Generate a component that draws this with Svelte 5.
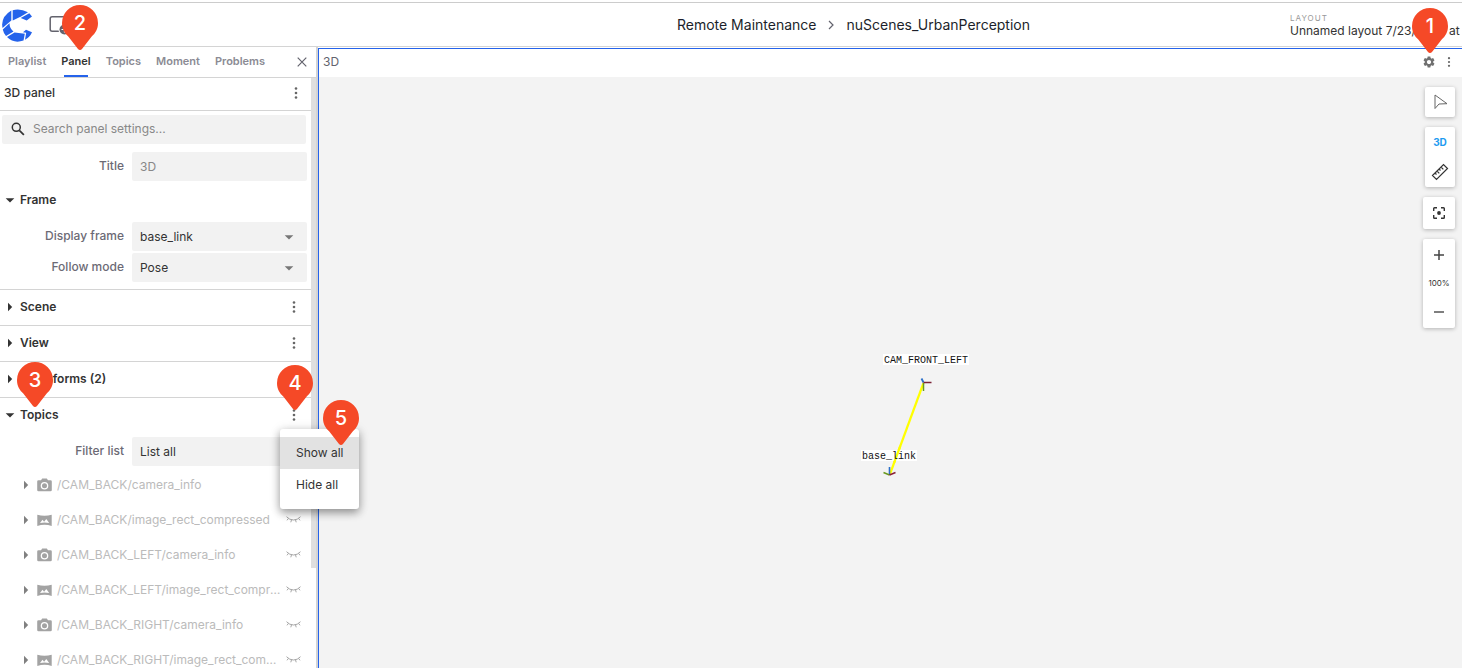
<script>
  const tabs = ['Playlist', 'Panel', 'Topics', 'Moment', 'Problems'];
  const sections = [
    { name: 'Scene', menu: true },
    { name: 'View', menu: true },
    { name: 'Transforms (2)', menu: false },
  ];
  const topics = [
    { name: '/CAM_BACK/camera_info', kind: 'camera' },
    { name: '/CAM_BACK/image_rect_compressed', kind: 'image' },
    { name: '/CAM_BACK_LEFT/camera_info', kind: 'camera' },
    { name: '/CAM_BACK_LEFT/image_rect_compressed', kind: 'image' },
    { name: '/CAM_BACK_RIGHT/camera_info', kind: 'camera' },
    { name: '/CAM_BACK_RIGHT/image_rect_compressed', kind: 'image' },
  ];
  const pins = [
    { n: 2, x: 80, y: 5 },
    { n: 3, x: 35, y: 362 },
    { n: 4, x: 295, y: 365 },
    { n: 5, x: 341, y: 400 },
  ];
  let active = $state('Panel');
</script>

{#snippet dots()}
  <svg class="dots" width="4" height="14" viewBox="0 0 4 14" aria-hidden="true">
    <circle cx="2" cy="2.5" r="1.3" /><circle cx="2" cy="7" r="1.3" /><circle cx="2" cy="11.5" r="1.3" />
  </svg>
{/snippet}

{#snippet caret(open)}
  <svg class="caret" width="10" height="10" viewBox="0 0 10 10" aria-hidden="true">
    {#if open}<path d="M.7 3.2h8.6L5 7.5z" />{:else}<path d="M3 .8v8.4L7.2 5z" />{/if}
  </svg>
{/snippet}

{#snippet pin(n)}
  <svg width="36" height="46" viewBox="0 0 36 46" aria-hidden="true">
    <path fill="#f54927" d="M18 0a18 18 0 0 1 18 18c0 6-2.5 10-6.500 13.800L20.200 43.800q-2.200 2.600-4.400 0L6.500 31.800C2.500 28 0 24 0 18A18 18 0 0 1 18 0z" />
  </svg>
  <span>{n}</span>
{/snippet}

<div class="app">
  <header class="top">
    <div class="brand">
      <svg width="32" height="34" viewBox="0 0 32 34" role="img" aria-label="Home">
        <g fill="#2563eb">
          <path d="M11.700 2.300Q19 .3 27 4.200L20 8.500 11.700 12.500z" />
          <path d="M19.700 10L28.300 5.200 31 8.500 25.700 12.500z" />
          <path d="M10.300 2.500V12.500L1.500 20Q-.6 9 10.300 2.500z" />
          <path d="M1.800 21.500L8.500 15.300Q8.500 20.500 12.500 23.500L5 28Q2.500 25 1.800 21.500z" />
          <path d="M6 29L13.500 24.500 23.800 25.800 22.500 32.500Q13 36 6 29z" />
          <path d="M22 24.200L25 21.700 31 24.200Q29 29 24 31.700L25.200 24.800z" />
        </g>
      </svg>
      <svg width="30" height="22" viewBox="0 0 30 22" aria-hidden="true">
        <rect x="1.200" y="2.700" width="20" height="14.600" rx="2" fill="none" stroke="#63636d" stroke-width="1.500" />
        <circle cx="15.500" cy="15.500" r="6" fill="#fff" /><circle cx="15.500" cy="15.500" r="5" fill="#63636d" />
        <path stroke="#fff" stroke-width="1.200" d="M12.500 15.500h6M15.500 12.500v6" />
      </svg>
    </div>
    <nav class="crumbs" aria-label="Breadcrumb">
      <a href="#project">Remote Maintenance</a>
      <svg width="6" height="10" viewBox="0 0 6 10" aria-hidden="true"><path d="M1 1l4 4-4 4" fill="none" stroke="#63636d" stroke-width="1.200" /></svg>
      <a href="#record">nuScenes_UrbanPerception</a>
    </nav>
    <div class="layout">
      <small>LAYOUT</small>
      <span>Unnamed layout 7/23/2024 at</span>
    </div>
  </header>

  <div class="body">
    <aside>
      <div class="tabs">
        {#each tabs as tab}
          <button class="tab" class:active={tab === active} onclick={() => (active = tab)}>{tab}</button>
        {/each}
        <button class="close" aria-label="Close">
          <svg width="10" height="10" viewBox="0 0 10 10"><path d="M.7.7l8.600 8.600M9.300.7L.7 9.300" stroke="#63636d" stroke-width="1.200" /></svg>
        </button>
      </div>
      <div class="scroll">
        <div class="content">
          <div class="title">
            <h1>3D panel</h1>
            <button aria-label="Panel menu">{@render dots()}</button>
          </div>
          <label class="search">
            <svg width="14" height="14" viewBox="0 0 14 14" aria-hidden="true"><circle cx="5.300" cy="5.300" r="4" fill="none" stroke="#333" stroke-width="1.500" /><path d="M8.300 8.300l4.600 4.600" stroke="#333" stroke-width="1.700" /></svg>
            <input type="text" placeholder="Search panel settings..." aria-label="Search panel settings" />
          </label>
          <div class="field">
            <label for="title">Title</label>
            <input id="title" type="text" placeholder="3D" />
          </div>
          <section class="frame">
            <button class="head">{@render caret(true)}<span>Frame</span></button>
            <div class="field">
              <label for="frame">Display frame</label>
              <div class="select">
                <select id="frame"><option>base_link</option></select>{@render caret(true)}
              </div>
            </div>
            <div class="field">
              <label for="follow">Follow mode</label>
              <div class="select">
                <select id="follow"><option>Pose</option></select>{@render caret(true)}
              </div>
            </div>
          </section>
          {#each sections as s}
            <section class="row">
              <button class="head">{@render caret(false)}<span>{s.name}</span></button>
              {#if s.menu}<button class="more" aria-label="{s.name} menu">{@render dots()}</button>{/if}
            </section>
          {/each}
          <section class="row">
            <button class="head">{@render caret(true)}<span>Topics</span></button>
            <button class="more" aria-label="Topics menu">{@render dots()}</button>
          </section>
          <div class="field filter">
            <label for="filter">Filter list</label>
            <div class="select">
              <select id="filter"><option>List all</option></select>{@render caret(true)}
            </div>
          </div>
          <ul>
            {#each topics as t}
              <li>
                {@render caret(false)}
                {#if t.kind === 'camera'}
                  <svg class="kind" width="15" height="14" viewBox="0 0 15 14" aria-hidden="true"><path fill-rule="evenodd" d="M5.200.5h4.600L11 2.200h2.500q1.300 0 1.300 1.300v8.500q0 1.300-1.300 1.300h-12Q.2 13.300.2 12V3.500q0-1.300 1.300-1.300H4zM7.500 3.900a3.800 3.800 0 1 0 0 7.600a3.800 3.800 0 0 0 0-7.600zM7.500 5.200a2.500 2.500 0 1 1 0 5a2.500 2.500 0 0 1 0-5z" /></svg>
                {:else}
                  <svg class="kind" width="15" height="14" viewBox="0 0 15 14" aria-hidden="true"><path d="M.3 1.700Q7.500 4 14.700 1.700V13Q7.500 10.700.3 13z" /><path fill="#fff" d="M3 10l2.500-3.200 1.600 1.900 2.200-2.800L12.200 10q-4.700-.8-9.200 0z" /></svg>
                {/if}
                <span>{t.name}</span>
                <button class="eye" aria-label="Show {t.name}">
                  <svg width="15" height="7" viewBox="0 0 15 7"><path fill="none" stroke="#a6a6a6" stroke-width="1" d="M.5.700Q3.500 4 7.500 4T14.500.700M2.500 2.300L1 4.300M5.500 3.800l-.7 2.500M9.500 3.800l.7 2.500M12.500 2.300L14 4.300" /></svg>
                </button>
              </li>
            {/each}
          </ul>
        </div>
        <div class="rail"><div class="thumb"></div></div>
      </div>
    </aside>

    <main>
      <div class="bar">
        <span>3D</span>
        <button class="gear" aria-label="Settings">
          <svg width="14" height="14" viewBox="0 0 24 24"><path fill="#707070" d="M19.140 12.940c.04-.3.060-.61.060-.94 0-.32-.02-.64-.07-.94l2.030-1.580c.18-.14.230-.41.120-.61l-1.920-3.320c-.12-.22-.37-.29-.59-.22l-2.390.96c-.5-.38-1.030-.7-1.620-.94l-.36-2.540c-.04-.24-.24-.41-.48-.41h-3.840c-.24 0-.43.170-.47.410l-.36 2.540c-.59.240-1.130.570-1.620.940l-2.390-.96c-.22-.08-.47 0-.59.220L2.740 8.870c-.12.210-.08.470.120.610l2.030 1.580c-.05.300-.09.630-.09.940s.02.640.070.940l-2.030 1.580c-.18.140-.23.410-.12.610l1.920 3.320c.12.220.370.290.590.220l2.390-.96c.5.380 1.030.700 1.620.940l.36 2.540c.05.240.240.410.480.410h3.840c.24 0 .44-.17.470-.41l.36-2.540c.59-.24 1.130-.56 1.620-.94l2.390.96c.22.080.470 0 .59-.22l1.920-3.320c.12-.22.070-.47-.12-.61l-2.010-1.580zM12 15.600c-1.980 0-3.600-1.620-3.600-3.600s1.620-3.600 3.600-3.600 3.600 1.620 3.600 3.600-1.620 3.600-3.600 3.600z" /></svg>
        </button>
        <button class="small" aria-label="Panel options">{@render dots()}</button>
      </div>
      <div class="canvas">
        <svg class="world" width="120" height="140" viewBox="0 0 120 140" aria-label="Transforms">
          <rect x="25" y="7" width="86" height="11" fill="#fff" />
          <path d="M65.500 36L32 127" stroke="#ff0" stroke-width="2.200" />
          <rect x="3" y="103" width="56" height="11" fill="#fff" />
          <path d="M42.300 99l-6.100 16.500" stroke="#ff0" stroke-width="2.200" />
          <path d="M31.500 128v-8" stroke="#2a6fc9" stroke-width="1.600" /><path d="M31.500 128l-6-2.500" stroke="#6a9a20" stroke-width="1.500" /><path d="M31.500 128l6-2.500" stroke="#8b2035" stroke-width="1.500" />
          <path d="M65.500 35.500l-2-4" stroke="#2a6fc9" stroke-width="1.800" /><path d="M65.500 36v8" stroke="#6a9a20" stroke-width="1.500" /><path d="M65.500 35.500h8" stroke="#7a2035" stroke-width="1.500" />
          <text x="26" y="16">CAM_FRONT_LEFT</text>
          <text x="4" y="112">base_link</text>
        </svg>
        <div class="tools">
          <div class="card narrow">
            <button aria-label="Select"><svg width="16" height="18" viewBox="0 0 16 18"><path d="M3 2v13.500L7 11l8-.3z" fill="none" stroke="#666" stroke-width="1" stroke-linejoin="round" /></svg></button>
          </div>
          <div class="card narrow">
            <button class="mode">3D</button>
            <button aria-label="Measure"><svg width="18" height="18" viewBox="0 0 18 18"><path d="M1.500 12.500l11-11 4 4-11 11zM4 10l1.500 1.500M6 8l2.300 2.300M8 6l1.500 1.500M10 4l2.300 2.300" fill="none" stroke="#333" stroke-width="1.200" /></svg></button>
          </div>
          <div class="card focus">
            <button aria-label="Center view"><svg width="12" height="12" viewBox="0 0 12 12"><path d="M.7 4V1.500Q.7.700 1.500.700H4M8 .7h2.500q.8 0 .8.8V4M11.300 8v2.500q0 .8-.8.8H8M4 11.300H1.500q-.8 0-.8-.8V8" fill="none" stroke="#333" stroke-width="1.400" /><circle cx="6" cy="6" r="1.900" fill="#333" /></svg></button>
          </div>
          <div class="card zoom">
            <button aria-label="Zoom in"><svg width="10" height="10" viewBox="0 0 10 10"><path d="M5 0v10M0 5h10" stroke="#444" stroke-width="1.500" /></svg></button>
            <span>100%</span>
            <button aria-label="Zoom out"><svg width="10" height="10" viewBox="0 0 10 10"><path d="M0 5h10" stroke="#555" stroke-width="1.500" /></svg></button>
          </div>
        </div>
      </div>
    </main>
  </div>

  <div class="menu" role="menu">
    <button role="menuitem" class="hover">Show all</button>
    <button role="menuitem">Hide all</button>
  </div>

  {#each pins as p}
    <div class="pin" style="left: {p.x - 18}px; top: {p.y}px">{@render pin(p.n)}</div>
  {/each}
  <div class="pin right">{@render pin(1)}</div>
</div>

<style>
  :global(body) { margin: 0; background: #fff; }
  .app {
    position: relative; display: flex; flex-direction: column; height: 100vh; overflow: hidden;
    box-sizing: border-box; padding-top: 2px;
    font: 12px/16px Inter, sans-serif; color: #333;
  }
  .app * { box-sizing: border-box; }
  button { border: 0; background: none; padding: 0; margin: 0; font: inherit; color: inherit; cursor: pointer; display: flex; align-items: center; justify-content: center; }
  svg { flex: none; display: block; }
  .dots { fill: #666; }

  .top { display: flex; align-items: center; flex: none; height: 45px; border-top: 1px solid #ccc; border-bottom: 1px solid #d4d4d4; }
  .brand { flex: 1; display: flex; align-items: center; gap: 16px; padding-left: 1px; }
  .crumbs { display: flex; align-items: center; gap: 12px; font-size: 14px; line-height: 20px; }
  .crumbs a { color: #1c1f2b; text-decoration: none; }
  .layout { width: 432px; padding: 2px 0 0 260px; display: flex; flex-direction: column; white-space: nowrap; }
  .layout small { font-size: 8px; line-height: 10px; letter-spacing: 1px; color: #999; }
  .layout span { line-height: 15px; }

  .body { display: flex; flex: 1; min-height: 0; }
  aside { width: 318px; flex: none; display: flex; flex-direction: column; border-right: 2px solid #d4d4d4; }
  .tabs { display: flex; align-items: stretch; gap: 15px; height: 31px; flex: none; padding: 0 9px 0 8px; border-bottom: 1px solid #d4d4d4; }
  .tab { position: relative; font-size: 11px; font-weight: 600; color: #8b8b94; padding-bottom: 2px; }
  .tab.active { color: #333; }
  .tab.active::after { content: ''; position: absolute; left: 3px; right: 3px; bottom: 0; height: 2px; background: #2563eb; }
  .close { margin-left: auto; }
  .scroll { flex: 1; min-height: 0; display: flex; overflow: hidden; }
  .content { flex: 1; min-width: 0; }
  .rail { width: 5px; flex: none; }
  .thumb { height: 83%; background: #dfdfdf; }

  .title { display: flex; align-items: center; justify-content: space-between; height: 33px; padding: 0 13px 2px 4px; border-bottom: 1px solid #d4d4d4; }
  h1 { margin: 0; font-size: 12px; font-weight: 500; }
  .search { display: flex; align-items: center; gap: 8px; height: 29px; margin: 4px 5px 8px 2px; padding: 0 0 2px 9px; background: #f2f2f2; border-radius: 2px; }
  input { border: 0; outline: 0; background: none; font: inherit; color: #333; padding: 0; min-width: 0; flex: 1; }
  input::placeholder { color: #888; opacity: 1; }
  .field { display: grid; grid-template-columns: 124px 1fr; column-gap: 8px; margin: 0 4px 2px 0; align-items: center; }
  .field > label { text-align: right; font-weight: 500; color: #6c6a75; padding-bottom: 2px; }
  .field > input, select { height: 29px; width: 100%; background: #f2f2f2; border-radius: 2px; padding: 0 8px; }
  select { appearance: none; border: 0; font: inherit; color: #333; grid-area: 1 / 1; }
  .select { display: grid; align-items: center; }
  .select .caret { grid-area: 1 / 1; justify-self: end; margin-right: 13px; pointer-events: none; fill: #777; }
  .caret { fill: #333; }
  .head { height: 34px; gap: 5px; padding-left: 5px; font-weight: 600; }
  .frame { padding: 0 0 5px; border-bottom: 1px solid #d4d4d4; }
  .frame .head { margin-bottom: 5px; }
  .row { display: flex; align-items: center; justify-content: space-between; height: 36px; padding: 0 15px 1px 0; border-bottom: 1px solid #d4d4d4; }
  .row:last-of-type { border-color: transparent; }
  .filter { margin-top: 3px; margin-bottom: 1px; }
  ul { list-style: none; margin: 0; padding: 0; }
  li { display: flex; align-items: center; height: 35px; padding: 0 10px 0 21px; color: #bbb; }
  li .caret { fill: #808080; }
  .kind { fill: #a3a3a3; margin: 0 5px 0 6px; }
  li span { flex: 1; min-width: 0; white-space: nowrap; overflow: hidden; text-overflow: ellipsis; }
  .eye { margin-left: 4px; }

  main { flex: 1; min-width: 0; margin-top: 1px; display: flex; flex-direction: column; border: solid #2563eb; border-width: 1px 0 0 1px; }
  .bar { display: flex; align-items: center; height: 28px; flex: none; padding: 0 11px 2px 4px; color: #63636d; }
  .gear { margin: 0 11px 0 auto; }
  .small .dots { height: 12px; }
  .canvas { position: relative; flex: 1; background: #f3f3f3; overflow: hidden; }
  .world { position: absolute; left: 47.200%; top: 45.700%; }
  .world text { font: 10px "Liberation Mono", monospace; fill: #111; }
  .tools { position: absolute; right: 7px; top: 10px; display: flex; flex-direction: column; align-items: flex-end; gap: 10px; }
  .card { width: 32px; background: #fff; border-radius: 2px; box-shadow: 0 1px 4px #0004; display: flex; flex-direction: column; }
  .narrow { width: 30px; }
  .card button { height: 30px; }
  .card .mode { color: #1e9bf0; font-size: 10px; font-weight: 700; }
  .focus button { height: 32px; }
  .zoom button { height: 32px; }
  .zoom span { height: 25px; line-height: 25px; text-align: center; font-size: 8px; }

  .menu { position: absolute; left: 280px; top: 429px; width: 79px; padding: 8px 0; background: #fff; border-radius: 3px; box-shadow: 0 4px 8px #0005, 0 1px 12px #0002; }
  .menu button { width: 100%; height: 32px; justify-content: flex-start; padding-left: 16px; }
  .menu .hover { background: #e2e2e2; }
  .pin { position: absolute; width: 36px; height: 46px; }
  .pin.right { right: 14px; top: 8px; }
  .pin span { position: absolute; left: 0; right: 0; top: 6px; text-align: center; font-size: 20px; line-height: 24px; font-weight: 500; color: #fff; }
</style>
